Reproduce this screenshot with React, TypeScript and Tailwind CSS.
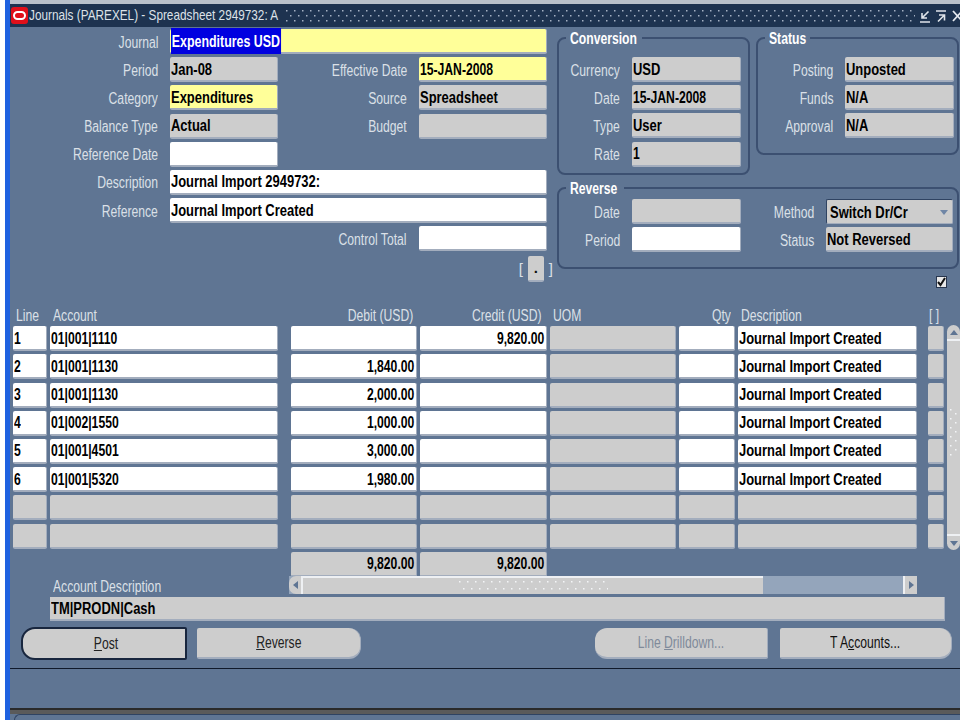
import React from 'react';

// the reference font is a squeezed Arial, no narrow family here so scale it
const Txt = ({ children, side = 'left', tight = false }: { children: React.ReactNode; side?: string; tight?: boolean }) => (
  <span className={`inline-block shrink-0 whitespace-nowrap ${tight ? 'scale-x-[0.76]' : 'scale-x-[0.81]'} ${side === 'right' ? 'origin-right' : side === 'center' ? 'origin-center' : 'origin-left'}`}>
    {children}
  </span>
);

const fieldBase = 'h-[25px] flex items-center px-px pt-[2px] rounded-[2px] border-b-2 border-r border-[#a3adbd] text-[16px] font-bold text-black overflow-hidden';

const Field = ({ value = '', tone = 'white', align = 'left', className = '' }: { value?: string; tone?: string; align?: string; className?: string }) => {
  const bg = tone === 'white' ? 'bg-white' : tone === 'yellow' ? 'bg-[#ffff99]' : 'bg-[#cdcdcd]';
  return (
    <div className={`${fieldBase} ${bg} ${align === 'right' ? 'justify-end pr-[2px]' : ''} ${className}`}>
      {value && <Txt side={align} tight={/^\d/.test(value)}>{value}</Txt>}
    </div>
  );
};

const Label = ({ children, className = '' }: { children: React.ReactNode; className?: string }) => (
  <div className={`h-[25px] pt-[2px] pr-px flex items-center justify-end text-[16px] text-[#dbe0e7] ${className}`}>
    <Txt side="right" tight>{children}</Txt>
  </div>
);

const Group = ({ title, legend, className = '', children }: { title: string; legend: string; className?: string; children: React.ReactNode }) => (
  <div className={`relative border-2 border-[#3c5071] rounded-lg ${className}`}>
    <div className={`absolute left-[7px] -top-[9px] pl-[4px] bg-[#5f7593] text-[16px] leading-[17px] font-bold text-white ${legend}`}>
      <Txt tight>{title}</Txt>
    </div>
    {children}
  </div>
);

const Dots = ({ className = '', id, w, h, dx, dy, color = '#f4f5f7' }: { className?: string; id: string; w: number; h: number; dx: number; dy: number; color?: string }) => (
  <svg className={className}>
    <defs>
      <pattern id={id} width={w} height={h} patternUnits="userSpaceOnUse">
        <rect x="1" y="1" width="1.5" height="1.5" fill={color} />
        <rect x={1 + dx} y={1 + dy} width="1.5" height="1.5" fill={color} />
      </pattern>
    </defs>
    <rect width="100%" height="100%" fill={`url(#${id})`} />
  </svg>
);

const lines = [
  { n: '1', acct: '01|001|1110', debit: '', credit: '9,820.00' },
  { n: '2', acct: '01|001|1130', debit: '1,840.00', credit: '' },
  { n: '3', acct: '01|001|1130', debit: '2,000.00', credit: '' },
  { n: '4', acct: '01|002|1550', debit: '1,000.00', credit: '' },
  { n: '5', acct: '01|001|4501', debit: '3,000.00', credit: '' },
  { n: '6', acct: '01|001|5320', debit: '1,980.00', credit: '' },
];

const headCls = 'h-[15px] flex items-center text-[16px] text-[#dbe0e7]';
const btnCls = 'h-[31px] flex items-center justify-center pt-[2px] bg-[#cdcdcd] text-[16px] border-b-2 border-r border-[#a3adbd]';

export default function App() {
  return (
    <div className="w-[960px] h-[720px] overflow-hidden flex bg-[#5f7593] font-['Liberation_Sans',sans-serif]">
      {/* left window edge */}
      <div className="w-[10px] shrink-0 flex">
        <div className="w-[5px] bg-white" />
        <div className="w-[5px] bg-[#1f62e0]" />
      </div>

      <div className="flex-1 min-w-0 flex flex-col">
        <div className="h-[4px] bg-[#b9c1cb]" />

        {/* title bar */}
        <div className="h-[23px] flex items-center bg-[#1e3350]">
          <div className="w-[17px] h-[17px] ml-[1px] shrink-0 rounded-[3px] bg-[#e0101a] flex items-center justify-center">
            <div className="w-[13px] h-[9px] rounded-[5px] border-2 border-white" />
          </div>
          <div className="ml-[1px] w-[256px] shrink-0 text-[15px] text-[#dde2e8]">
            <span className="inline-block whitespace-nowrap origin-left scale-x-[0.785]">Journals (PAREXEL) - Spreadsheet 2949732: A</span>
          </div>
          <Dots id="title-dots" w={8} h={10} dx={4} dy={5} color="#a4b0c2" className="w-[630px] h-[14px] shrink-0" />
          <div className="ml-[4px] flex items-center">
            <svg width="12" height="14" viewBox="0 0 12 14" fill="none" stroke="#dfe4ea" strokeWidth="1.6">
              <path d="M1 13h10M9.500 2.500L3.500 8.500M3 4v5h5" />
            </svg>
            <svg width="12" height="14" viewBox="0 0 12 14" fill="none" stroke="#dfe4ea" strokeWidth="1.6" className="ml-[4px]">
              <path d="M1 2h10M3 12.500L9 6.500M4 6h5.500v5.500" />
            </svg>
            <svg width="11" height="14" viewBox="0 0 11 14" fill="none" stroke="#e6eaf0" strokeWidth="1.8" className="ml-[5px] shrink-0">
              <path d="M1 2l9 10M10 2l-9 10" />
            </svg>
          </div>
        </div>

        {/* header block */}
        <div className="h-[281px] shrink-0 flex">
          <div className="w-[538px] shrink-0 pt-[2px]">
            <div className="grid grid-cols-[149px_108px_119px_128px] gap-x-[11px] gap-y-[3.2px]">
              <Label>Journal</Label>
              <div className="col-span-3 h-[25px] flex items-center px-px rounded-[2px] border-b-2 border-r border-[#a3adbd] bg-[#ffff99] text-[16px] font-bold">
                <span className="inline-block shrink-0 whitespace-nowrap origin-left scale-x-[0.775] bg-[#0000e0] text-white px-px pt-[2px]">Expenditures USD</span>
              </div>

              <Label>Period</Label>
              <Field value="Jan-08" tone="gray" />
              <Label>Effective Date</Label>
              <Field value="15-JAN-2008" tone="yellow" />

              <Label>Category</Label>
              <Field value="Expenditures" tone="yellow" />
              <Label>Source</Label>
              <Field value="Spreadsheet" tone="gray" />

              <Label>Balance Type</Label>
              <Field value="Actual" tone="gray" />
              <Label>Budget</Label>
              <Field tone="gray" />

              <Label>Reference Date</Label>
              <Field />
              <div className="col-span-2" />

              <Label>Description</Label>
              <Field value="Journal Import 2949732:" className="col-span-3" />

              <Label>Reference</Label>
              <Field value="Journal Import Created" className="col-span-3" />

              <div className="col-span-2" />
              <Label>Control Total</Label>
              <Field />
            </div>
            <div className="mt-[5px] flex justify-end items-center gap-[5px] text-[15px] text-[#dbe0e7]">
              <span>[</span>
              <div className="w-[16px] h-[26px] flex items-center justify-center rounded-[2px] bg-[#cdcdcd] border-b-2 border-[#a3adbd] text-[#111] font-bold">.</div>
              <span className="-mr-[5px]">]</span>
            </div>
          </div>

          <div className="ml-[9px] w-[403px] shrink-0 pt-[10px] flex flex-col">
            <div className="flex items-start gap-[6px]">
              <Group title="Conversion" legend="w-[76px]" className="w-[193px] h-[138px] pt-[18px] pl-[10px]">
                <div className="grid grid-cols-[52px_109px] gap-x-[11px] gap-y-[3.2px]">
                  <Label>Currency</Label>
                  <Field value="USD" tone="gray" />
                  <Label>Date</Label>
                  <Field value="15-JAN-2008" tone="gray" />
                  <Label>Type</Label>
                  <Field value="User" tone="gray" />
                  <Label>Rate</Label>
                  <Field value="1" tone="gray" />
                </div>
              </Group>
              <Group title="Status" legend="w-[45px]" className="w-[203px] h-[118px] pt-[18px] pl-[10px]">
                <div className="grid grid-cols-[66px_109px] gap-x-[11px] gap-y-[3.2px]">
                  <Label>Posting</Label>
                  <Field value="Unposted" tone="gray" />
                  <Label>Funds</Label>
                  <Field value="N/A" tone="gray" />
                  <Label>Approval</Label>
                  <Field value="N/A" tone="gray" />
                </div>
              </Group>
            </div>

            <Group title="Reverse" legend="w-[58px]" className="mt-[12px] w-[402px] h-[82px] pt-[10px] pl-[10px]">
              <div className="grid grid-cols-[52px_109px_63px_127px] gap-x-[11px] gap-y-[3.2px]">
                <Label>Date</Label>
                <Field tone="gray" />
                <Label>Method</Label>
                <div className="h-[25px] flex items-center justify-between pl-[3px] pr-[3px] pt-[2px] rounded-[2px] bg-[#cdcdcd] border border-[#2f4362] border-r-[#a3adbd] border-b-[#a3adbd] text-[16px] font-bold text-black">
                  <Txt>Switch Dr/Cr</Txt>
                  <svg width="8" height="5" viewBox="0 0 8 5" className="mr-[1px]"><path d="M0 0h8L4 5z" fill="#6f86a6" /></svg>
                </div>
                <Label>Period</Label>
                <Field />
                <Label>Status</Label>
                <Field value="Not Reversed" tone="gray" />
              </div>
            </Group>

            <div className="mt-[7px] flex justify-end pr-[13px]">
              <div className="w-[11px] h-[12px] bg-[#e8e8e8] border border-[#28364e] flex items-center justify-center">
                <svg width="9" height="10" viewBox="0 0 9 10" fill="none" stroke="#111" strokeWidth="2"><path d="M1 5l2.500 3L8 1" /></svg>
              </div>
            </div>
          </div>
        </div>

        {/* lines block */}
        <div className="flex pl-[3px]">
          <div className="grid grid-cols-[34px_228px_7px_126px_127px_126px_56px_179px_5px_16px] gap-x-[3px] gap-y-[3.2px]">
            <div className={`${headCls} pl-[3px]`}><Txt tight>Line</Txt></div>
            <div className={`${headCls} pl-[3px]`}><Txt tight>Account</Txt></div>
            <div />
            <div className={`${headCls} justify-end pr-[4px]`}><Txt side="right" tight>Debit (USD)</Txt></div>
            <div className={`${headCls} justify-end pr-[5px]`}><Txt side="right" tight>Credit (USD)</Txt></div>
            <div className={`${headCls} pl-[3px]`}><Txt tight>UOM</Txt></div>
            <div className={`${headCls} justify-end pr-[4px]`}><Txt side="right" tight>Qty</Txt></div>
            <div className={`${headCls} pl-[3px]`}><Txt tight>Description</Txt></div>
            <div />
            <div className={`${headCls} pl-px`}><Txt tight>[ ]</Txt></div>

            {lines.map((l) => (
              <React.Fragment key={l.n}>
                <Field value={l.n} />
                <Field value={l.acct} />
                <div />
                <Field value={l.debit} align="right" />
                <Field value={l.credit} align="right" />
                <Field tone="gray" />
                <Field />
                <Field value="Journal Import Created" />
                <div />
                <Field tone="gray" />
              </React.Fragment>
            ))}

            {[7, 8].map((n) => (
              <React.Fragment key={n}>
                <Field tone="gray" />
                <Field tone="gray" />
                <div />
                <Field tone="gray" />
                <Field tone="gray" />
                <Field tone="gray" />
                <Field tone="gray" />
                <Field tone="gray" />
                <div />
                <Field tone="gray" />
              </React.Fragment>
            ))}

            <div className="col-span-3" />
            <Field value="9,820.00" tone="gray" align="right" />
            <Field value="9,820.00" tone="gray" align="right" />
          </div>

          {/* vertical scrollbar */}
          <div className="ml-[3px] mt-[17px] w-[13px] h-[225px] rounded-[7px] bg-[#cdcdcd] flex flex-col items-center">
            <div className="h-[16px] w-full border-b-2 border-[#eef0f3] flex items-center justify-center">
              <svg width="8" height="5" viewBox="0 0 8 5"><path d="M0 5h8L4 0z" fill="#5f7593" /></svg>
            </div>
            <Dots id="vscroll-dots" w={10} h={9} dx={5} dy={4} className="mt-[67px] w-[10px] h-[50px]" />
            <div className="mt-auto h-[16px] w-full border-t-2 border-[#eef0f3] flex items-center justify-center">
              <svg width="8" height="5" viewBox="0 0 8 5"><path d="M0 0h8L4 5z" fill="#5f7593" /></svg>
            </div>
          </div>
        </div>

        {/* account description + horizontal scrollbar */}
        <div className="-mt-[1px] h-[21px] shrink-0 flex items-start">
          <div className="ml-[43px] w-[236px] mt-[2px] h-[19px] flex items-center text-[16px] text-[#dbe0e7]"><Txt tight>Account Description</Txt></div>
          <div className="w-[628px] h-[18px] flex bg-[#94a5bb]">
            <div className="w-[14px] rounded-l-[7px] bg-[#cdcdcd] border-r-2 border-[#eef0f3] flex items-center justify-center">
              <svg width="5" height="8" viewBox="0 0 5 8"><path d="M5 0v8L0 4z" fill="#5f7593" /></svg>
            </div>
            <div className="w-[460px] bg-[#cdcdcd] border-t-2 border-[#eef0f3] flex items-center justify-center">
              <Dots id="hscroll-dots" w={8} h={14} dx={4} dy={7} className="w-[150px] h-[12px]" />
            </div>
            <div className="ml-auto w-[14px] bg-[#cdcdcd] border-l-2 border-[#eef0f3] flex items-center justify-center">
              <svg width="5" height="8" viewBox="0 0 5 8"><path d="M0 0v8l5-4z" fill="#5f7593" /></svg>
            </div>
          </div>
        </div>

        <div className="ml-[40px] w-[895px] h-[24px] shrink-0 flex items-center px-px pt-[2px] bg-[#cdcdcd] border-b-2 border-r border-[#a3adbd] text-[16px] font-bold text-black"><Txt>TM|PRODN|Cash</Txt></div>

        {/* buttons */}
        <div className="mt-[6px] h-[33px] shrink-0 flex items-center">
          <div className="ml-[11px] w-[166px] h-[33px] flex items-center justify-center pt-[2px] pl-[4px] bg-[#cdcdcd] rounded-l-[14px] rounded-r-[2px] border-2 border-[#18263e] text-[16px] text-[#222]">
            <Txt side="center" tight><u>P</u>ost</Txt>
          </div>
          <div className={`ml-[10px] w-[164px] ${btnCls} rounded-r-[12px] rounded-l-[2px] text-[#222]`}>
            <Txt side="center" tight><u>R</u>everse</Txt>
          </div>
          <div className={`ml-[234px] w-[173px] ${btnCls} rounded-l-[12px] rounded-r-[2px] text-[#7f8a9a]`}>
            <Txt side="center" tight>Line <u>D</u>rilldown...</Txt>
          </div>
          <div className={`ml-[12px] w-[172px] ${btnCls} rounded-r-[12px] rounded-l-[2px] text-[#111]`}>
            <Txt side="center" tight>T A<u>c</u>counts...</Txt>
          </div>
        </div>

        <div className="mt-[8px] h-[40px] shrink-0 border-t border-[#10192a]" />
        <div className="h-[2px] shrink-0 bg-[#2a2a2a]" />
        <div className="h-[4px] shrink-0 bg-[#5a5a5a]" />
        <div className="ml-[4px] h-[6px] shrink-0 rounded-tl-[6px] border-t border-l border-[#2f4362]" />
      </div>
    </div>
  );
}
